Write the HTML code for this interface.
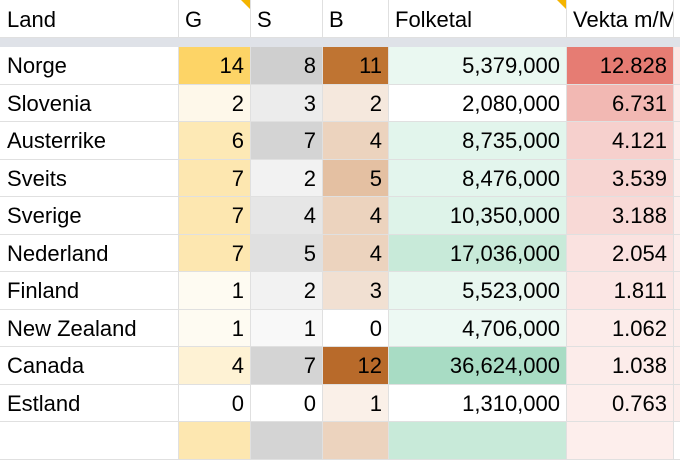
<!DOCTYPE html><html><head><style>
body{margin:0;width:680px;height:424px;overflow:hidden;background:#fff;font-family:"Liberation Sans",sans-serif;font-size:22px;color:#000;position:relative}
.r{position:absolute;left:0;width:700px;height:37.5px;display:flex}
.r div{flex:none;box-sizing:border-box;border-right:1px solid #e0e0e0;border-bottom:1px solid #e0e0e0;padding:0 6px;text-align:right;line-height:37px;white-space:nowrap;overflow:hidden;position:relative}
.r div:nth-child(1){width:179px;text-align:left;padding-left:7px}
.r div:nth-child(2){width:72px}
.r div:nth-child(3){width:72px}
.r div:nth-child(4){width:66px}
.r div:nth-child(5){width:178px}
.r div:nth-child(6){width:107px}
.r div:nth-child(7){width:26px}
.h div{text-align:left!important;line-height:40px}
.band{position:absolute;left:0;top:38px;width:680px;height:9px;background:#dfe2e8}
.tri{position:absolute;right:0;top:0;width:0;height:0;border-left:9px solid transparent;border-top:9px solid #f4b400}
</style></head><body>
<div class="r h" style="top:0;height:38px"><div>Land</div><div>G<span class="tri"></span></div><div>S</div><div>B</div><div>Folketal<span class="tri"></span></div><div>Vekta m/M</div><div></div></div>
<div class="band"></div>
<div class="r" style="top:47px"><div>Norge</div><div style="background:#fdd466">14</div><div style="background:#cfcfcf">8</div><div style="background:#bf7432">11</div><div style="background:#eaf8f1">5,379,000</div><div style="background:#e67c73">12.828</div><div style="background:#fce8e6"></div></div>
<div class="r" style="top:84.5px"><div>Slovenia</div><div style="background:#fef8ea">2</div><div style="background:#ececec">3</div><div style="background:#f5e8dd">2</div><div style="background:#fff">2,080,000</div><div style="background:#f2b8b3">6.731</div><div style="background:#fdeeec"></div></div>
<div class="r" style="top:122px"><div>Austerrike</div><div style="background:#fde9b5">6</div><div style="background:#d4d4d4">7</div><div style="background:#ecd3be">4</div><div style="background:#e2f5ec">8,735,000</div><div style="background:#f6d0cd">4.121</div><div style="background:#fdeeec"></div></div>
<div class="r" style="top:159.5px"><div>Sveits</div><div style="background:#fde7b0">7</div><div style="background:#f2f2f2">2</div><div style="background:#e4c0a2">5</div><div style="background:#e3f5ed">8,476,000</div><div style="background:#f7d5d2">3.539</div><div style="background:#fdeeec"></div></div>
<div class="r" style="top:197px"><div>Sverige</div><div style="background:#fde7b0">7</div><div style="background:#e6e6e6">4</div><div style="background:#ecd3be">4</div><div style="background:#def3e9">10,350,000</div><div style="background:#f8d9d6">3.188</div><div style="background:#fdeeec"></div></div>
<div class="r" style="top:234.5px"><div>Nederland</div><div style="background:#fde7b0">7</div><div style="background:#e0e0e0">5</div><div style="background:#ecd3be">4</div><div style="background:#c8ead9">17,036,000</div><div style="background:#fae2e0">2.054</div><div style="background:#fdeeec"></div></div>
<div class="r" style="top:272px"><div>Finland</div><div style="background:#fefbf2">1</div><div style="background:#f2f2f2">2</div><div style="background:#f1e0d2">3</div><div style="background:#e9f7f0">5,523,000</div><div style="background:#fbe6e4">1.811</div><div style="background:#fdeeec"></div></div>
<div class="r" style="top:309.5px"><div>New Zealand</div><div style="background:#fefbf2">1</div><div style="background:#f8f8f8">1</div><div style="background:#fff">0</div><div style="background:#edf9f3">4,706,000</div><div style="background:#fcecea">1.062</div><div style="background:#fdeeec"></div></div>
<div class="r" style="top:347px"><div>Canada</div><div style="background:#fef2d4">4</div><div style="background:#d4d4d4">7</div><div style="background:#b86a2a">12</div><div style="background:#a8dcc4">36,624,000</div><div style="background:#fcecea">1.038</div><div style="background:#fdeeec"></div></div>
<div class="r" style="top:384.5px"><div>Estland</div><div style="background:#fff">0</div><div style="background:#fff">0</div><div style="background:#faf0e8">1</div><div style="background:#fff">1,310,000</div><div style="background:#fdeeec">0.763</div><div style="background:#fdeeec"></div></div>
<div class="r" style="top:422px"><div></div><div style="background:#fde7b0"></div><div style="background:#d4d4d4"></div><div style="background:#ecd3be"></div><div style="background:#c8ead9"></div><div style="background:#fdeeec"></div><div></div></div>
</body></html>
